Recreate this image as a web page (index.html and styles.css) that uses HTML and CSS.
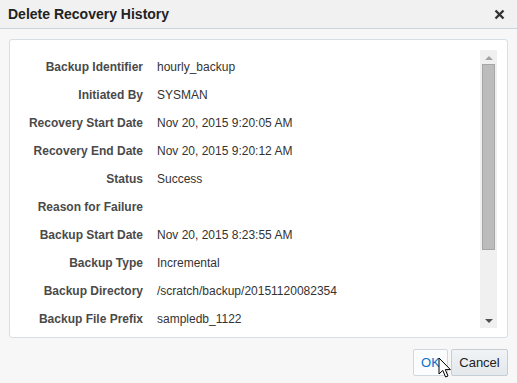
FILE: index.html
```html
<!DOCTYPE html>
<html lang="en">
  <head>
    <meta charset="UTF-8" />
    <title>Delete Recovery History</title>
    <link rel="stylesheet" href="styles.css">
  </head>
  <body>
    <div class="dialog">
      <div class="dialog-header">
        <h1 class="dialog-title">Delete Recovery History</h1>
        <svg class="close-icon" width="11" height="11" viewBox="0 0 11 11">
          <path d="M1.5 1.5 L9.5 9.5 M9.5 1.5 L1.5 9.5" stroke="#333" stroke-width="2.4" />
        </svg>
      </div>

      <div class="dialog-body">
        <div class="panel">
          <div class="details">
            <div class="label">Backup Identifier</div>
            <div class="value">hourly_backup</div>
            <div class="label">Initiated By</div>
            <div class="value">SYSMAN</div>
            <div class="label">Recovery Start Date</div>
            <div class="value">Nov 20, 2015 9:20:05 AM</div>
            <div class="label">Recovery End Date</div>
            <div class="value">Nov 20, 2015 9:20:12 AM</div>
            <div class="label">Status</div>
            <div class="value">Success</div>
            <div class="label">Reason for Failure</div>
            <div class="value"></div>
            <div class="label">Backup Start Date</div>
            <div class="value">Nov 20, 2015 8:23:55 AM</div>
            <div class="label">Backup Type</div>
            <div class="value">Incremental</div>
            <div class="label">Backup Directory</div>
            <div class="value">/scratch/backup/20151120082354</div>
            <div class="label">Backup File Prefix</div>
            <div class="value">sampledb_1122</div>
          </div>

          <div class="scrollbar">
            <div class="arrow arrow-up"></div>
            <div class="track">
              <div class="thumb"></div>
            </div>
            <div class="arrow arrow-down"></div>
          </div>
        </div>

        <div class="buttons">
          <button class="btn btn-ok">OK</button>
          <button class="btn btn-cancel">Cancel</button>
          <svg class="cursor" width="14" height="22" viewBox="0 0 14 22">
            <path d="M1 1 L1 17 L4.8 13.4 L7.6 20 L10 19 L7.3 12.6 L12.4 12.6 Z" fill="#fff" stroke="#000" stroke-width="1" stroke-linejoin="miter" />
          </svg>
        </div>
      </div>
    </div>
  </body>
</html>
```

FILE: styles.css
```css
* {
  box-sizing: border-box;
}
body {
  margin: 0;
  font-family: "Liberation Sans", Arial, sans-serif;
  background: #f7f7f7;
}
.dialog {
  width: 517px;
  height: 383px;
  display: flex;
  flex-direction: column;
}
.dialog-header {
  height: 29px;
  background: #f1f1f1;
  border-bottom: 1px solid #c8d5df;
  display: flex;
  align-items: center;
  justify-content: space-between;
  padding: 0 12px 0 8px;
}
.dialog-title {
  margin: 0;
  font-size: 14px;
  font-weight: bold;
  color: #222222;
}
.close-icon {
  display: block;
}

.dialog-body {
  flex: 1;
  display: flex;
  flex-direction: column;
  padding: 10px 9px 0 9px;
}
.panel {
  height: 299px;
  background: #ffffff;
  border: 1px solid #d6dfe6;
  border-radius: 3px;
  display: flex;
  overflow: hidden;
}
.details {
  flex: 1;
  overflow: hidden;
  display: grid;
  grid-template-columns: 133px 1fr;
  grid-auto-rows: 28px;
  column-gap: 14px;
  align-items: center;
  align-content: start;
  padding-top: 13px;
  font-size: 12px;
}
.label {
  text-align: right;
  font-weight: bold;
  color: #4a4a4a;
}
.value {
  color: #333333;
  white-space: nowrap;
}

.scrollbar {
  width: 17px;
  margin: 10px 10px 9px 0;
  background: #f0f0f0;
  display: flex;
  flex-direction: column;
  align-items: center;
}
.arrow {
  width: 0;
  height: 0;
  border-left: 4px solid transparent;
  border-right: 4px solid transparent;
}
.arrow-up {
  margin: 6px 0 4px;
  border-bottom: 4px solid #a3a3a3;
}
.arrow-down {
  margin: 4px 0 5px;
  border-top: 4px solid #505050;
}
.track {
  flex: 1;
  width: 100%;
  padding: 0 2px;
}
.thumb {
  height: 186px;
  background: #bcbcbc;
  border: 1px solid #a6a6a6;
}

.buttons {
  position: relative;
  display: flex;
  justify-content: flex-end;
  gap: 3px;
  padding-top: 11px;
}
.btn {
  height: 27px;
  font-family: "Liberation Sans", Arial, sans-serif;
  font-size: 13px;
  border: 1px solid #c4ced7;
  border-radius: 2px;
  padding: 0 7px;
}
.btn-ok {
  width: 35px;
  background: #fbfcfd;
  color: #0572ce;
  border-color: #cfd8e0;
}
.btn-cancel {
  width: 57px;
  background: linear-gradient(#f1f3f5, #e4e8eb);
  color: #222222;
}
.cursor {
  position: absolute;
  left: 429px;
  top: 19px;
}
```
